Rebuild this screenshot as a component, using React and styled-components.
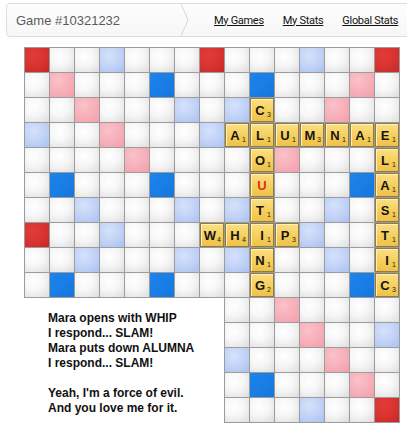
import React from "react";
import styled, { createGlobalStyle } from "styled-components";

const Global = createGlobalStyle`
  html, body { margin: 0; padding: 0; background: #fff; overflow: hidden; }
  body { font-family: "Liberation Sans", Arial, sans-serif; }
`;

const Page = styled.div`
  width: 407px;
  height: 433px;
  padding: 3px 0 0 6px;
  box-sizing: border-box;
  overflow: hidden;
`;

const Header = styled.div`
  display: flex;
  align-items: stretch;
  width: 440px;
  height: 34px;
  box-sizing: border-box;
  border: 1px solid #dedede;
  border-radius: 4px;
  background: linear-gradient(#fdfdfd, #f7f7f7);
`;

const Crumb = styled.div`
  display: flex;
  align-items: center;
  width: 164px;
  padding-left: 9px;
  font-size: 13px;
  color: #5a5a5a;
`;

const Chevron = styled.svg`
  display: block;
  flex: none;
`;

const Nav = styled.nav`
  display: flex;
  align-items: center;
  gap: 19px;
  margin-left: 24px;
`;

const NavLink = styled.a`
  font-family: Roboto, "Liberation Sans", sans-serif;
  font-size: 11px;
  letter-spacing: -0.3px;
  color: #111;
  text-decoration: underline;
  cursor: pointer;
`;

const Board = styled.div`
  display: grid;
  grid-template-columns: repeat(15, 24px);
  grid-template-rows: repeat(15, 24px);
  gap: 1px;
  padding: 1px;
  width: max-content;
  margin: 10px 0 0 18px;
`;

const bg = {
  n: "radial-gradient(circle at 38% 35%, #ffffff 0%, #f6f6f6 45%, #dcdcdc 100%)",
  tw: "radial-gradient(circle at 35% 30%, #e23c3a 0%, #d83331 50%, #c52828 100%)",
  dw: "radial-gradient(circle at 35% 30%, #fac2c9 0%, #f7b0ba 50%, #f19fac 100%)",
  tl: "linear-gradient(135deg, #1c84ec, #1577dd)",
  dl: "radial-gradient(circle at 38% 32%, #d6e2fb 0%, #c2d3f7 50%, #a9c0f0 100%)",
};

const Cell = styled.div`
  position: relative;
  box-shadow: 0 0 0 1px #9c9c9c;
  background: ${(p) => bg[p.$type]};
`;

const Tile = styled.div`
  position: relative;
  display: flex;
  align-items: center;
  justify-content: center;
  width: 24px;
  height: 24px;
  box-sizing: border-box;
  padding-right: ${(p) => (p.$narrow ? 0 : 4)}px;
  border: 1px solid #8e7c48;
  background: linear-gradient(#fcdf84, #f5cd58 60%, #efc24a);
  box-shadow: inset 1px 1px 0 #fff0b8;
`;

const Letter = styled.span`
  font-family: "Liberation Sans", Arial, sans-serif;
  font-weight: bold;
  font-size: 13px;
  line-height: 1;
  color: ${(p) => (p.$blank ? "#d9321c" : "#151515")};
`;

const Score = styled.span`
  position: absolute;
  right: 2px;
  bottom: 3px;
  font-family: "Liberation Sans", Arial, sans-serif;
  font-size: 7px;
  line-height: 1;
  color: #222;
`;

const Note = styled.div`
  grid-column: 1 / 9;
  grid-row: 11 / 16;
  background: #fff;
  padding: 13px 0 0 23px;
  font-family: "Liberation Sans", Arial, sans-serif;
  font-weight: bold;
  font-size: 12px;
  line-height: 15px;
  color: #111;
`;

const Para = styled.p`
  margin: 0 0 15px;
`;

const TW = [[0,0],[0,7],[0,14],[7,0],[7,14],[14,0],[14,7],[14,14]];
const TL = [[1,5],[1,9],[5,1],[5,5],[5,9],[5,13],[9,1],[9,5],[9,9],[9,13],[13,5],[13,9]];
const DL = [[0,3],[0,11],[2,6],[2,8],[3,0],[3,7],[3,14],[6,2],[6,6],[6,8],[6,12],[7,3],[7,11],[8,2],[8,6],[8,8],[8,12],[11,0],[11,7],[11,14],[12,6],[12,8],[14,3],[14,11]];

const has = (list, r, c) => list.some(([a, b]) => a === r && b === c);

function typeOf(r, c) {
  if (has(TW, r, c)) return "tw";
  if (has(TL, r, c)) return "tl";
  if (has(DL, r, c)) return "dl";
  if ((r === c || r + c === 14) && !(r >= 5 && r <= 9 && r !== 7)) return "dw";
  return "n";
}

const tiles = {};
const put = (r, c, l, s) => { tiles[`${r}-${c}`] = { l, s }; };
put(2, 9, "C", 3);
"ALUMNAE".split("").forEach((l, i) => put(3, 8 + i, l, [1, 1, 1, 3, 1, 1, 1][i]));
put(4, 9, "O", 1);
put(5, 9, "U", null);
put(6, 9, "T", 1);
put(7, 7, "W", 4);
put(7, 8, "H", 4);
put(7, 9, "I", 1);
put(7, 10, "P", 3);
put(8, 9, "N", 1);
put(9, 9, "G", 2);
"LASTIC".split("").forEach((l, i) => put(4 + i, 14, l, [1, 1, 1, 1, 1, 3][i]));

export default function App() {
  const cells = [];
  for (let r = 0; r < 15; r++) {
    for (let c = 0; c < 15; c++) {
      if (r >= 10 && c <= 7) continue;
      const t = tiles[`${r}-${c}`];
      cells.push(
        <Cell key={`${r}-${c}`} $type={typeOf(r, c)} style={{ gridRow: r + 1, gridColumn: c + 1 }}>
          {t && (
            <Tile $narrow={t.l === "I" || t.s === null}>
              <Letter $blank={t.s === null}>{t.l}</Letter>
              {t.s !== null && <Score>{t.s}</Score>}
            </Tile>
          )}
        </Cell>
      );
    }
  }
  return (
    <>
      <Global />
      <Page>
        <Header>
          <Crumb>Game #10321232</Crumb>
          <Chevron width="10" height="32" viewBox="0 0 10 32">
            <polyline points="1,0 8,16 1,32" fill="none" stroke="#d8d8d8" strokeWidth="1" />
          </Chevron>
          <Nav>
            <NavLink>My Games</NavLink>
            <NavLink>My Stats</NavLink>
            <NavLink>Global Stats</NavLink>
          </Nav>
        </Header>
        <Board>
          {cells}
          <Note>
            <Para>
              Mara opens with WHIP<br />
              I respond... SLAM!<br />
              Mara puts down ALUMNA<br />
              I respond... SLAM!
            </Para>
            <Para>
              Yeah, I'm a force of evil.<br />
              And you love me for it.
            </Para>
          </Note>
        </Board>
      </Page>
    </>
  );
}
